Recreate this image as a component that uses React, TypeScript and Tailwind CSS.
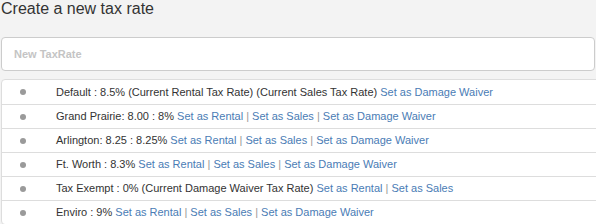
const rows: { label: string; links: string[] }[] = [
  { label: 'Default : 8.5% (Current Rental Tax Rate) (Current Sales Tax Rate)', links: ['Set as Damage Waiver'] },
  { label: 'Grand Prairie: 8.00 : 8%', links: ['Set as Rental', 'Set as Sales', 'Set as Damage Waiver'] },
  { label: 'Arlington: 8.25 : 8.25%', links: ['Set as Rental', 'Set as Sales', 'Set as Damage Waiver'] },
  { label: 'Ft. Worth : 8.3%', links: ['Set as Rental', 'Set as Sales', 'Set as Damage Waiver'] },
  { label: 'Tax Exempt : 0% (Current Damage Waiver Tax Rate)', links: ['Set as Rental', 'Set as Sales'] },
  { label: 'Enviro : 9%', links: ['Set as Rental', 'Set as Sales', 'Set as Damage Waiver'] },
]

export default function App() {
  return (
    <div className="h-[224px] w-[596px] overflow-hidden bg-[#f3f3f3] font-['Liberation_Sans',Arial,sans-serif] text-[#333]">
      <h2 className="pl-px text-[16px] leading-[18px]">Create a new tax rate</h2>
      <div className="mt-[19px] pl-px pr-[1px]">
        <input
          placeholder="New TaxRate"
          className="h-[34px] w-full rounded-[4px] border border-[#ccc] bg-white px-[12px] text-[11px] font-bold outline-none placeholder:text-[#c4c4c4]"
        />
      </div>
      <ul className="mt-[8px] ml-px w-[640px] rounded-[4px] border border-[#ddd] bg-white">
        {rows.map((r, i) => (
          <li
            key={r.label}
            className={`grid h-[24px] grid-cols-[54px_1fr] items-center text-[11px] ${i > 0 ? 'border-t border-[#ddd]' : ''}`}
          >
            <div className="flex justify-center pr-[12px]">
              <div className="h-[6px] w-[6px] rounded-full bg-[#9a9a9a]" />
            </div>
            <div className="whitespace-nowrap">
              {r.label}
              {r.links.map((l, j) => (
                <span key={l}>
                  {j > 0 ? <span className="text-[#999]"> | </span> : ' '}
                  <a className="text-[#4a7cb5]">{l}</a>
                </span>
              ))}
            </div>
          </li>
        ))}
      </ul>
    </div>
  )
}
